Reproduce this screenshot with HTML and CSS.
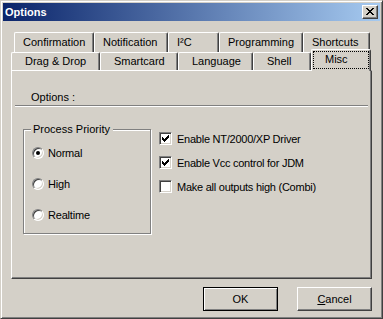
FILE: index.html
```html
<!DOCTYPE html>
<html>
<head>
  <meta charset="UTF-8" />
  <title>Options</title>
  <link rel="stylesheet" href="styles.css">
</head>
<body>

  <div class="window">
    <div class="title-bar">
      <span class="title-text">Options</span>
      <button class="close-btn" title="Close">
        <svg width="8" height="7" viewBox="0 0 8 7" shape-rendering="crispEdges">
          <path fill="#000" d="M0 0h2v1h-2zM6 0h2v1h-2zM1 1h2v1h-2zM5 1h2v1h-2zM2 2h4v1h-4zM3 3h2v1h-2zM2 4h4v1h-4zM1 5h2v1h-2zM5 5h2v1h-2zM0 6h2v1h-2zM6 6h2v1h-2z"/>
        </svg>
      </button>
    </div>

    <div class="tabs">
      <div class="tab-row back">
        <div class="tab tab-confirm">Confirmation</div>
        <div class="tab tab-notify">Notification</div>
        <div class="tab tab-i2c">I²C</div>
        <div class="tab tab-prog">Programming</div>
        <div class="tab tab-short">Shortcuts</div>
      </div>
      <div class="tab-row front">
        <div class="tab tab-drag">Drag &amp; Drop</div>
        <div class="tab tab-smart">Smartcard</div>
        <div class="tab tab-lang">Language</div>
        <div class="tab tab-shell">Shell</div>
        <div class="tab tab-misc active"><span class="focus">Misc</span></div>
      </div>

      <div class="tab-page">
        <div class="page-head">Options :</div>
        <div class="page-body">
          <fieldset class="group">
            <legend>Process Priority</legend>
            <label class="radio-row"><span class="radio checked"></span>Normal</label>
            <label class="radio-row"><span class="radio"></span>High</label>
            <label class="radio-row"><span class="radio"></span>Realtime</label>
          </fieldset>

          <div class="checks">
            <label class="check-row">
              <span class="checkbox"><svg width="7" height="7" viewBox="0 0 7 7" shape-rendering="crispEdges"><path fill="#000" d="M0 2h1v1h1v1h1v-1h1v-1h1v-1h1v-1h1v3h-1v1h-1v1h-1v1h-1v1h-1v-1h-1v-1h-1v-1h-1z"/></svg></span>
              Enable NT/2000/XP Driver
            </label>
            <label class="check-row">
              <span class="checkbox"><svg width="7" height="7" viewBox="0 0 7 7" shape-rendering="crispEdges"><path fill="#000" d="M0 2h1v1h1v1h1v-1h1v-1h1v-1h1v-1h1v3h-1v1h-1v1h-1v1h-1v1h-1v-1h-1v-1h-1v-1h-1z"/></svg></span>
              Enable Vcc control for JDM
            </label>
            <label class="check-row">
              <span class="checkbox"></span>
              Make all outputs high (Combi)
            </label>
          </div>
        </div>
      </div>
    </div>

    <div class="buttons">
      <button class="btn default">OK</button>
      <button class="btn"><u>C</u>ancel</button>
    </div>
  </div>

</body>
</html>
```

FILE: styles.css
```css
html, body {
  margin: 0;
  background-color: #d4d0c8;
}

body {
  font-family: "Liberation Sans", Arial, sans-serif;
  font-size: 11px;
  color: #000;
}

.window {
  width: 383px;
  height: 319px;
  box-sizing: border-box;
  padding: 2px;
  background-color: #d4d0c8;
  border: 1px solid;
  border-color: #d4d0c8 #404040 #404040 #d4d0c8;
  box-shadow: inset 1px 1px #fff, inset -1px -1px #808080;
}

/* caption */
.title-bar {
  height: 18px;
  display: flex;
  align-items: center;
  justify-content: space-between;
  padding: 0 2px;
  background: linear-gradient(to right, #0a246a, #a6caf0);
  color: #fff;
  font-weight: bold;
}

.close-btn {
  width: 16px;
  height: 14px;
  box-sizing: border-box;
  padding: 2px 0 0 0;
  display: flex;
  align-items: flex-start;
  justify-content: center;
  background-color: #d4d0c8;
  border: 1px solid;
  border-color: #fff #404040 #404040 #fff;
  box-shadow: inset -1px -1px #808080;
}

/* tab control */
.tabs {
  width: 361px;
  margin: 11px 0 0 8px;
}

.tab-row {
  display: flex;
}

.tab-row.back {
  height: 20px;
  padding-left: 3px;
}

.tab-row.front {
  height: 18px;
}

.tab {
  box-sizing: border-box;
  height: 100%;
  background-color: #d4d0c8;
  border: 1px solid;
  border-bottom: 0;
  border-color: #fff #404040 #404040 #fff;
  border-radius: 2px 2px 0 0;
  box-shadow: inset -1px 0 #808080;
  white-space: nowrap;
}

.back .tab {
  line-height: 18px;
  padding-left: 8px;
}

.front .tab {
  line-height: 16px;
  padding-left: 13px;
}

.tab-confirm { width: 80px; }
.tab-notify { width: 74px; }
.tab-i2c { width: 51px; }
.tab-prog { width: 84px; }
.tab-short { width: 67px; }

.tab-drag { width: 89px; padding-left: 14px; }
.tab-smart { width: 78px; }
.tab-lang { width: 75px; }
.tab-shell { width: 58px; }
.tab-misc { width: 60px; }

.front .tab.active {
  position: relative;
  z-index: 2;
  height: 22px;
  margin-top: -3px;
  padding-left: 0;
}

.tab.active .focus {
  display: block;
  height: 18px;
  box-sizing: border-box;
  margin: 1px 1px 0 1px;
  padding-left: 11px;
  border: 1px dotted #000;
  line-height: 15px;
}

.tab-page {
  height: 209px;
  box-sizing: border-box;
  border: 1px solid;
  border-color: #fff #404040 #404040 #fff;
  box-shadow: inset -1px -1px #808080;
}

.page-head {
  margin: 0 3px;
  padding: 20px 0 1px 16px;
  line-height: 13px;
  border-bottom: 1px solid #808080;
  box-shadow: 0 1px #fff;
}

.page-body {
  display: flex;
  align-items: flex-start;
  padding-left: 11px;
}

/* group box */
.group {
  width: 128px;
  min-inline-size: 0;
  box-sizing: border-box;
  margin: 17px 0 0 0;
  padding: 10px 0 12px 8px;
  border: 1px solid #808080;
  box-shadow: inset 1px 1px #fff, 1px 1px #fff;
}

.group legend {
  margin-left: -1px;
  padding: 0 3px 0 2px;
  line-height: 13px;
  background-color: #d4d0c8;
}

.radio-row {
  display: flex;
  align-items: center;
  gap: 4px;
  height: 13px;
  letter-spacing: -0.2px;
}

.radio-row + .radio-row {
  margin-top: 18px;
}

.radio {
  width: 12px;
  height: 12px;
  box-sizing: border-box;
  display: flex;
  align-items: center;
  justify-content: center;
  border-radius: 50%;
  background-color: #fff;
  border: 1px solid;
  border-color: #808080 #fff #fff #808080;
  box-shadow: inset 1px 1px #404040, inset -1px -1px #d4d0c8;
}

.radio.checked::after {
  content: "";
  width: 4px;
  height: 4px;
  border-radius: 50%;
  background-color: #000;
}

/* check boxes */
.checks {
  display: flex;
  flex-direction: column;
  gap: 11px;
  margin: 26px 0 0 8px;
}

.check-row {
  display: flex;
  align-items: center;
  gap: 5px;
  height: 13px;
  white-space: nowrap;
  letter-spacing: -0.25px;
}

.checkbox {
  width: 13px;
  height: 13px;
  box-sizing: border-box;
  display: flex;
  align-items: center;
  justify-content: center;
  background-color: #fff;
  border: 1px solid;
  border-color: #808080 #fff #fff #808080;
  box-shadow: inset 1px 1px #404040, inset -1px -1px #d4d0c8;
}

/* dialog buttons */
.buttons {
  display: flex;
  justify-content: flex-end;
  gap: 19px;
  margin-top: 8px;
  padding-right: 8px;
}

.btn {
  width: 75px;
  height: 24px;
  box-sizing: border-box;
  padding: 0;
  font: inherit;
  color: #000;
  background-color: #d4d0c8;
  border: 1px solid;
  border-color: #fff #404040 #404040 #fff;
  box-shadow: inset -1px -1px #808080;
}

.btn.default {
  border-color: #000;
  box-shadow: inset 1px 1px #fff, inset -1px -1px #808080;
}
```
